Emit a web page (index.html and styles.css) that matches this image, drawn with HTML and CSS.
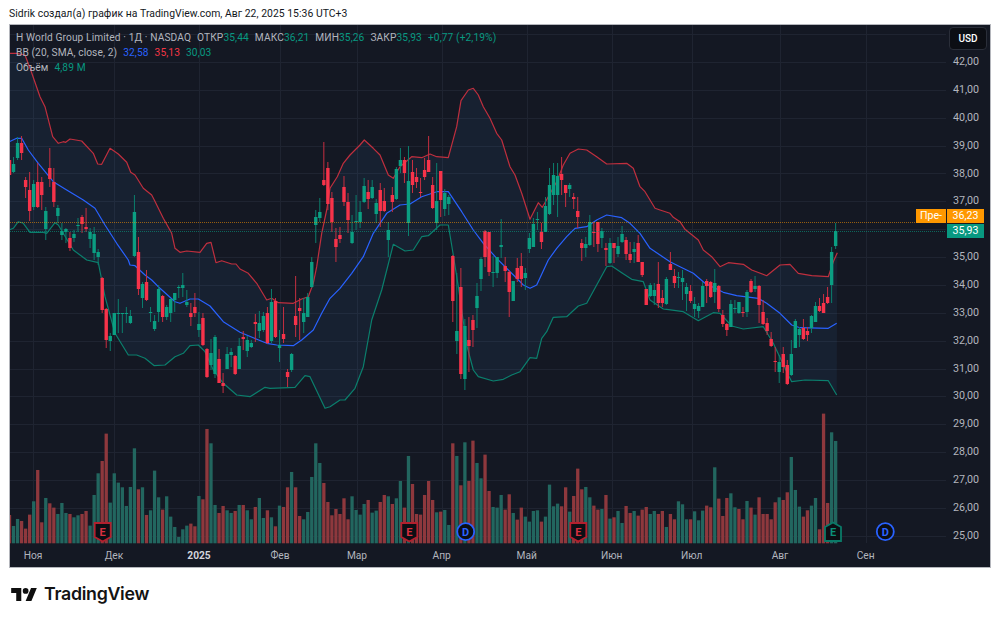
FILE: index.html
```html
<!DOCTYPE html>
<html lang="ru">
<head>
<meta charset="utf-8">
<title>H World Group Limited</title>
<link rel="stylesheet" href="styles.css">
</head>
<body>
<header class="byline">Sidrik создал(а) график на TradingView.com, Авг 22, 2025 15:36 UTC+3</header>
<main class="chart">
  <svg id="plot" class="plot" viewBox="10 25 980 541" xmlns="http://www.w3.org/2000/svg"></svg>
  <div class="legend">
    <div class="legend-row"><span>H World Group Limited · 1Д · NASDAQ</span><span class="ohlc">ОТКР<b class="up">35,44</b></span><span class="ohlc">МАКС<b class="up">36,21</b></span><span class="ohlc">МИН<b class="up">35,26</b></span><span class="ohlc">ЗАКР<b class="up">35,93</b></span><b class="up">+0,77 (+2,19%)</b></div>
    <div class="legend-row"><span>BB (20, SMA, close, 2)</span><b class="blue">32,58</b><b class="red">35,13</b><b class="up">30,03</b></div>
    <div class="legend-row"><span>Объём</span><b class="up">4,89 M</b></div>
  </div>
  <div class="currency">USD</div>
  <div class="price-tags">
    <div class="tag-row"><span class="tag tag-name">Пре-</span><span class="tag tag-pre">36,23</span></div>
    <div class="tag-row"><span class="tag tag-last">35,93</span></div>
  </div>
</main>
<footer class="brand">
  <svg class="brand-mark" viewBox="0 4 35.500 18" xmlns="http://www.w3.org/2000/svg"><path d="M14 22H7V11H0V4h14v18zM28 22h-8L27.500 4h8L28 22z"/><circle cx="20" cy="8" r="4"/></svg>
  <span class="brand-name">TradingView</span>
</footer>
<script src="chart.js"></script>
</body>
</html>
```
FILE: styles.css
```css
* { box-sizing: border-box; }
html, body { margin: 0; padding: 0; background: #fff; }
body { width: 1000px; height: 620px; overflow: hidden; font-family: Roboto, sans-serif; }
.byline { height: 24px; padding: 6px 0 0 9px; font-size: 10.4px; line-height: 16px; letter-spacing: 0.03px; color: #131722; white-space: nowrap; }
.chart { position: relative; width: 982px; height: 544px; margin-left: 9px; border: 1px solid #b4b6bc; background: #141823; }
.plot { display: block; width: 980px; height: 541px; }
.legend { position: absolute; left: 6px; top: 5px; font-size: 10.2px; line-height: 15px; letter-spacing: 0.1px; color: #b2b5be; }
.legend-row { display: flex; gap: 6px; white-space: nowrap; }
.legend-row b { font-weight: 400; }
.up { color: #089981; }
.red { color: #f23645; }
.blue { color: #2962ff; }
.currency { position: absolute; left: 939px; top: 2px; width: 38px; height: 23px; border: 1px solid #2a2e39; border-radius: 4px; background: #0c0e14; color: #fff; font-size: 10px; font-weight: 500; line-height: 21px; text-align: center; }
.price-tags { position: absolute; right: 6px; top: 184px; display: flex; flex-direction: column; gap: 1px; align-items: flex-end; }
.tag-row { display: flex; gap: 1px; }
.tag { display: block; height: 14px; font-size: 10.6px; line-height: 14px; color: #fff; text-align: center; }
.tag-name { width: 30px; background: #ff9800; }
.tag-pre { width: 37px; background: #ff9800; }
.tag-last { width: 37px; background: #089981; }
.brand { display: flex; align-items: center; gap: 7px; padding: 14px 0 0 11px; }
.brand-mark { width: 26px; height: 13px; fill: #0f0f0f; }
.brand-name { font-family: Inter, sans-serif; font-size: 17.8px; font-weight: 600; line-height: 24px; letter-spacing: -0.3px; color: #131313; }
.grid { stroke: #1f2431; stroke-width: 1; }
.band { fill: rgba(60, 120, 180, 0.1); stroke: none; }
.line { fill: none; stroke-width: 1.2; stroke-linejoin: round; }
.line-up { stroke: #bf2f3e; }
.line-mid { stroke: #2962ff; }
.line-low { stroke: #0b7f6d; }
.vol-r { fill: #8e383d; }
.vol-g { fill: #22665f; }
.body-r { fill: #f7334a; }
.body-g { fill: #0b9e82; }
.wick-r { stroke: #c62f40; stroke-width: 1; }
.wick-g { stroke: #0b7f6d; stroke-width: 1; }
.pl-pre { stroke: #ff9800; stroke-opacity: .55; stroke-width: 1; stroke-dasharray: 1 1; }
.pl-last { stroke: #089981; stroke-opacity: .6; stroke-width: 1; stroke-dasharray: 1 1; }
.axis { font-family: Roboto, sans-serif; font-size: 10.7px; fill: #b2b5be; }
.axis-time { font-size: 10.2px; text-anchor: middle; }
.axis-year { font-weight: 700; fill: #d1d4dc; }
.mk-bg { fill: #0c0e14; stroke-width: 1.8; }
.mk-r { stroke: #b3202e; }
.mk-g { stroke: #0a7a68; }
.mk-d { stroke: #2962ff; }
.mk-t { font-family: Roboto, sans-serif; font-size: 11px; font-weight: 700; text-anchor: middle; }
.mk-tr { fill: #d9303f; }
.mk-tg { fill: #0a8f78; }
.mk-td { fill: #2962ff; }
```
FILE: chart.js
```js
(function () {
  var NS = 'http://www.w3.org/2000/svg';
  var svg = document.getElementById('plot');
  function el(tag, cls, attrs, text) {
    var e = document.createElementNS(NS, tag);
    e.setAttribute('class', cls);
    for (var k in attrs) e.setAttribute(k, attrs[k]);
    if (text) e.textContent = text;
    svg.appendChild(e);
    return e;
  }
  function z(x0, y0, a) {
    var out = [];
    for (var i = 0; i < a.length; i += 2) out.push([x0 + a[i] / 3, y0 + a[i + 1] / 3]);
    return out;
  }
  function pts(a) { return a.map(function (p) { return p[0].toFixed(1) + ',' + p[1].toFixed(1); }).join(' '); }

  var upper = [].concat(
    z(0, 0, [28,160,50,160,75,165,92,210,120,290,135,320,158,410,175,430,190,425,197,427,210,417,245,423,280,460,293,492,305,493,330,445,355,462,380,487,392,517,405,525,430,565,455,585]),
    z(0, 200, [463,0,490,55,515,100,525,145,540,157,560,153,600,157,620,130,633,127,648,188,665,182,695,192,708,192,720,207,745,220,770,250,800,300,815,295,835,308,880,310,905,297,925,290,940,250,950,200,965,100,980,30]),
    z(330, 60, [0,385,22,350,40,310,60,285,90,255,103,240,130,265,150,285,175,345,190,355,210,320,245,290,275,293,300,282,320,290,355,293,380,200,393,122,415,90,430,85,445,105,460,140,480,175,500,220,515,240,540,320,555,345,575,400,600,478,625,428,637,442,655,410,680,365,700,315,720,280,745,267,770,270,800,290,830,312,890,310,910,325,930,380,945,395,975,445,990,450]),
    z(660, 130, [30,250,40,262,60,275,75,298,115,330,130,360,155,380,180,410,205,398,250,403,275,420,320,437,360,405,390,403,415,430,455,437,505,440,520,395,532,368])
  );
  var middle = [].concat(
    z(0, 0, [28,425,50,415,65,415,85,450,115,490,160,545,200,570]),
    z(0, 200, [250,0,285,25,315,75,350,130,385,180,390,195,405,197,435,225,455,240,480,265,525,305,540,310,570,297,595,297,630,318,670,365,720,397,800,430,830,435,880,437,905,420,940,390,965,340,990,295]),
    z(330, 260, [30,85,65,40]),
    z(330, 60, [100,590,130,520,170,460,210,435,240,432,275,410,320,395,355,395,395,455,430,510,460,550,500,595]),
    z(330, 260, [535,30,560,55,580,75,600,85,620,75,655,0]),
    z(330, 60, [680,565,710,530,735,505,770,500,800,480,830,465,875,473,900,490,930,520,960,565,1020,605]),
    z(660, 130, [60,410,100,430,135,460,190,487,230,497,295,505,320,520,360,550,395,585,420,593,505,595,530,580])
  );
  var lower = [].concat(
    z(0, 200, [28,90,40,85,55,65,70,70,90,97,130,97,140,100,165,68,175,75,205,125,220,150,260,180,295,188,315,290,345,400,385,465,410,465,435,475,463,497,495,495,525,470,550,460,570,437,595,435,615,455,640,510,670,550,710,585,750,590,795,562,810,565,885,562,915,527,930,530,975,625]),
    z(330, 260, [0,440,30,420,45,420,75,385,100,320,125,180,155,90]),
    z(330, 60, [190,553,225,573,250,570,275,530,295,527,330,495,355,495,370,585]),
    z(330, 260, [385,80,410,255,430,330,445,350,490,363,520,358,545,345,570,335,600,293,620,295,635,235,650,215,670,172,710,170,745,138,770,130,800,75,830,20,845,18,875,38,905,58,940,65,960,120,1000,147]),
    z(660, 130, [20,538,70,545,115,572,160,548,180,550,215,588,250,597,310,590,340,640,380,725,395,755,435,750,505,752,530,795])
  );

  // volume: colour, then bar top on a 3x scale (base 400; base 430 from index 164)
  var bars = [
    'r315','g348','g327','r333','r356','r314','g274','r180','r337','g264','r280','r293','g312','g279','g309','r312','g322','g316','r312','r303',
    'g347','g255','g190','r153','r71','g278','g190','g218','g232','g288','g231','g115','r238','g232','r315','g301','g182','g262','r299','g259',
    'g320','g351','g381','g358','g347','r341','r349','g258','r268','r57','g100','g285','r309','r288','g301','g309','r303','g285','r285','g301',
    'g328','r291','g264','g324','r301','g322','r349','g287','r291','r232','g186','r232','r318','g328','g306','g201','g100','g159','r219','r276',
    'r316','r297','r312','r265','r328','g259','g300','g314','g282','r270','g308','g302','r276','r255','g259','r282','g265','g213','r293','g138',
    'r222','r312','r314','r255','r213','r270','g307','r305','g300','g345','r100','g138','r226','g97','r213','r92','g159','g205','r134','r243',
    'g291','g293','g255','r299','r253','g309','r329','r293','g320','g335','g303','g301','r335','g320','g224','g289','g281','r289','r232','g305',
    'r258','r176','r238','g231','g262','r287','r299','g297','r255','g326','r322','g303','g339','r288','r309','g303','r317','r299','r291','g312',
    'g303','r312','r303','g351',
    'r342','r358','g304','g313','g358','r358','g334','g361','g332','r317','r322','g202','r296','r348','r294','g280','g322','r327','r358','g303',
    'r323','g344','r292','r342','r342','r358','r307','g292','r300','r277','g171','g270','g320','r350','r331','g317','g294','r388','r41','r309','g97','g123'
  ];
  var offset = 164;
  // [high, low, bodyTop, bodyBottom]
  var c = [
    [159,176,160,175],[157,173,164,172],[137,160,143,158],[136,160,143,153],[177,198,180,187],[172,221,190,211],[180,210,184,207],[163,208,182,207],[177,210,182,195],[207,240,211,229],
    [148,187,168,179],[168,207,182,202],[205,223,208,216],[223,240,231,235],[228,243,229,232],[232,251,238,248],[230,242,234,238],[218,232,225,226],[215,233,217,224],[208,232,227,229],
    [228,248,232,239],[227,260,234,253],[249,265,252,257],[277,313,278,310],[308,348,309,340],[333,351,336,341],[313,335,313,335],[299,333,313,314],[313,333,313,314],[307,323,313,314],
    [310,324,316,323],[195,257,212,256],[237,295,252,289],[282,308,284,298],[270,301,282,300],[307,322,312,313],[315,331,321,329],[285,322,289,312],[295,322,296,317],[305,320,307,317],
    [298,322,299,313],[293,312,293,300],[285,298,287,288],[273,297,285,288],[290,307,302,305],[303,326,313,317],[293,317,307,313],[312,337,324,330],[313,346,318,345],[348,378,349,377],
    [339,370,353,365],[335,378,337,374],[349,383,359,383],[373,393,383,386],[347,369,354,369],[348,367,352,355],[355,375,356,374],[338,369,346,369],[331,350,337,339],[336,357,340,351],
    [340,348,343,347],[314,342,322,324],[311,338,323,331],[312,332,316,330],[307,344,313,343],[289,343,302,341],[298,338,301,337],[330,362,345,348],[307,343,334,339],[369,387,372,377],
    [353,372,354,370],[276,337,316,325],[298,340,308,311],[298,333,313,322],[293,317,297,317],[257,288,262,287],[210,243,217,225],[198,222,212,218],[142,186,180,185],[162,210,168,204],
    [192,232,198,222],[228,262,239,247],[227,243,235,239],[176,206,187,202],[193,233,202,220],[215,244,232,243],[195,230,221,222],[201,228,212,222],[178,203,186,202],[180,209,192,199],
    [180,199,187,198],[199,223,203,214],[183,227,190,211],[188,212,201,211],[222,257,230,240],[187,212,195,202],[167,200,169,199],[148,173,160,166],[157,183,160,173],[146,236,181,223],
    [160,193,172,185],[168,188,177,182],[178,197,192,193],[158,180,170,177],[136,172,160,172],[177,209,185,208],[163,230,201,223],[171,217,171,200],[189,216,193,209],[195,215,197,204],
    [255,322,256,301],[273,354,331,341],[268,379,287,374],[319,390,326,379],[317,372,340,346],[315,347,320,330],[283,328,296,308],[257,291,259,279],[230,267,231,257],[232,276,232,272],
    [256,287,272,273],[257,278,257,273],[219,258,245,247],[257,282,266,271],[270,317,272,292],[281,301,281,301],[258,282,268,279],[253,287,266,279],[268,290,273,278],[233,253,238,249],
    [218,247,224,247],[212,230,219,220],[223,249,232,242],[197,232,206,232],[168,215,185,214],[163,205,175,195],[163,217,176,195],[157,195,174,180],[185,207,185,193],[183,197,185,189],
    [193,209,197,199],[197,228,211,217],[239,261,243,248],[237,257,244,248],[215,246,222,245],[222,247,232,233],[222,252,222,244],[228,248,231,238],[243,266,248,250],[238,264,243,263],
    [243,263,243,248],[237,257,246,254],[226,243,234,242],[237,260,240,254],[242,263,254,260],[242,263,249,252],[235,262,243,262],[262,277,262,275],[289,305,289,305],[283,297,285,296],
    [283,305,290,296],[262,308,284,303],[290,307,298,303],[277,305,279,304],[252,270,264,270],[269,288,276,283],[272,288,277,278],[270,300,278,282],[283,311,287,294],[285,303,291,301],
    [297,317,304,309],[303,318,306,311],[282,307,286,307],[279,303,281,286],[281,298,282,297],[269,303,283,292],[285,312,286,309],[310,327,315,324],[323,336,324,330],[300,327,304,327],
    [300,313,308,309],[302,314,302,313],[307,317,312,313],[290,317,292,312],[279,293,281,292],[276,292,286,289],[285,323,286,305],[300,325,312,324],[318,335,323,331],[332,347,339,346],
    [347,372,361,362],[355,383,362,372],[347,373,354,367],[360,385,365,384],[340,376,354,375],[319,348,321,348],[327,347,329,335],[319,340,328,339],[327,341,331,335],[315,333,316,328],
    [302,322,306,322],[298,312,306,311],[294,313,303,313],[287,304,297,303],[247,303,252,285],[223,249,231,246]
  ];

  // grid
  var months = [
    ['Ноя', 33], ['Дек', 114], ['2025', 199, 1], ['Фев', 280], ['Мар', 357], ['Апр', 441.7],
    ['Май', 526.7], ['Июн', 611.7], ['Июл', 691.7], ['Авг', 780], ['Сен', 865.7]
  ];
  var price;
  for (price = 43; price >= 25; price--) {
    var gy = Math.round(62 + 27.87 * (42 - price)) + 0.5;
    el('line', 'grid', { x1: 10, x2: 946, y1: gy, y2: gy });
  }
  months.forEach(function (m) {
    var gx = Math.round(m[1]) + 0.5;
    el('line', 'grid', { x1: gx, x2: gx, y1: 25, y2: 543 });
  });

  // band
  el('polygon', 'band', { points: pts(upper.concat(lower.slice().reverse())) });

  // volume
  function X(i) { return 9.5 + 4.03 * i; }
  bars.forEach(function (b, i) {
    var h = parseInt(b.slice(1), 10);
    var px = ((i >= offset ? 430 : 400) - h) / 3;
    el('rect', 'vol-' + b[0], { x: (X(i) - 1.65).toFixed(2), y: (543.3 - px).toFixed(2), width: 3.3, height: px.toFixed(2) });
  });

  // band lines
  el('polyline', 'line line-up', { points: pts(upper) });
  el('polyline', 'line line-low', { points: pts(lower) });
  el('polyline', 'line line-mid', { points: pts(middle) });

  // candles
  c.forEach(function (k, i) {
    var col = i === 181 ? 'g' : bars[i][0];
    var x = X(i);
    el('line', 'wick-' + col, { x1: x.toFixed(2), x2: x.toFixed(2), y1: k[0], y2: k[1] });
    el('rect', 'body-' + col, { x: (x - 1.7).toFixed(2), y: k[2], width: 3.4, height: Math.max(k[3] - k[2], 1) });
  });

  // price lines
  el('line', 'pl-pre', { x1: 10, x2: 916, y1: 222.5, y2: 222.5 });
  el('line', 'pl-last', { x1: 10, x2: 946, y1: 231.5, y2: 231.5 });

  // axes
  for (price = 42; price >= 25; price--) {
    if (price === 36) continue;
    var ly = 62 + 27.87 * (42 - price) + 3;
    el('text', 'axis', { x: 953, y: ly.toFixed(1) }, price + ',00');
  }
  months.forEach(function (m) {
    el('text', 'axis axis-time' + (m[2] ? ' axis-year' : ''), { x: m[1], y: 559 }, m[0]);
  });

  // event markers
  function earn(x, down) {
    var y = 532;
    var d = down
      ? [[x - 8, y - 9], [x + 8, y - 9], [x + 8, y + 5], [x, y + 9.5], [x - 8, y + 5]]
      : [[x, y - 9.5], [x + 8, y - 5], [x + 8, y + 9], [x - 8, y + 9], [x - 8, y - 5]];
    el('polygon', 'mk-bg ' + (down ? 'mk-r' : 'mk-g'), { points: pts(d) });
    el('text', 'mk-t ' + (down ? 'mk-tr' : 'mk-tg'), { x: x, y: y + 4 }, 'E');
  }
  function divd(x) {
    el('circle', 'mk-bg mk-d', { cx: x, cy: 531.7, r: 8.5 });
    el('text', 'mk-t mk-td', { x: x, y: 535.7 }, 'D');
  }
  earn(102.7, true); earn(409.3, true); earn(578.3, true); earn(833, false);
  divd(465.7); divd(885.3);
})();
```
